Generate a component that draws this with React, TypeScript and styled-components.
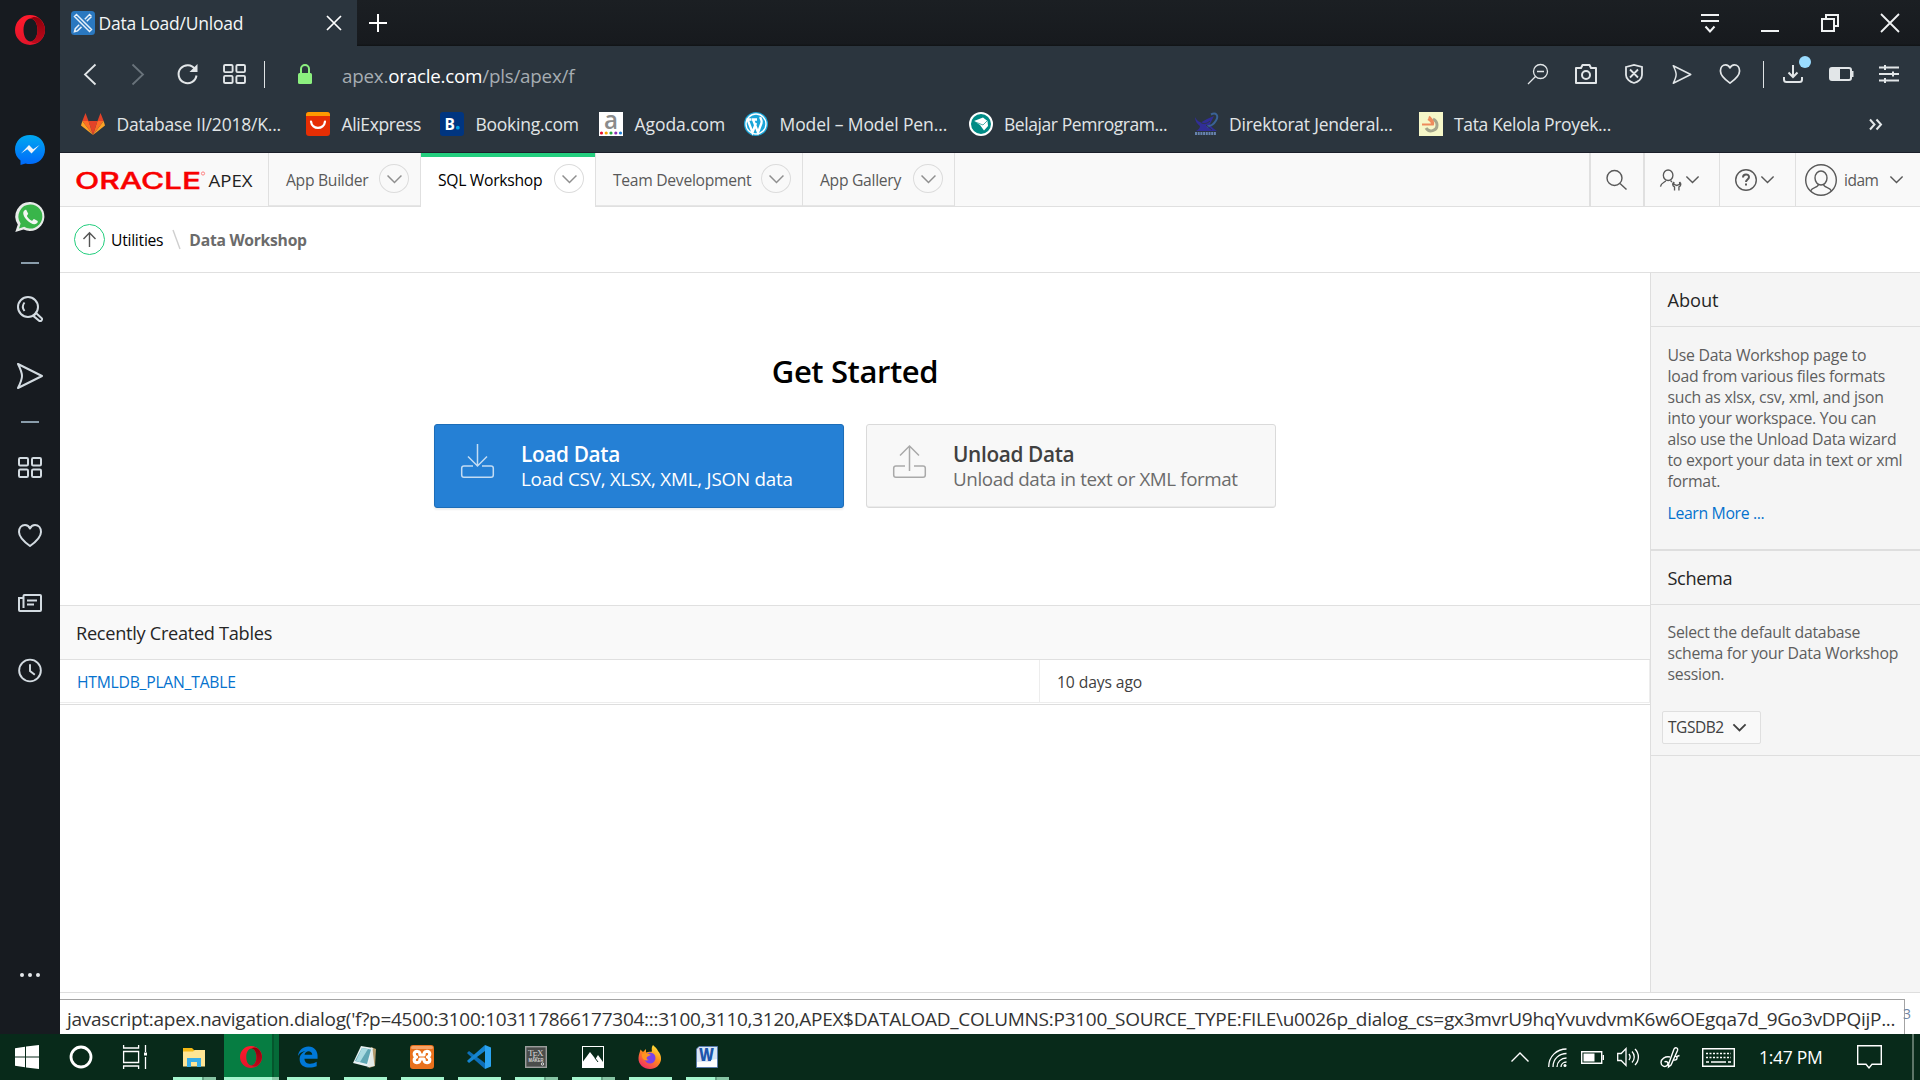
import React from 'react';
import styled, { createGlobalStyle, css } from 'styled-components';

const GlobalStyle = createGlobalStyle`
  *, *::before, *::after { box-sizing: border-box; }
  body { margin: 0; background: #fff; font-family: "Open Sans", "Noto Sans", sans-serif; }
`;

const Screen = styled.div`
  display: flex;
  flex-direction: column;
  width: 1920px;
  height: 1080px;
  overflow: hidden;
`;

const BrowserWindow = styled.div`
  display: flex;
  height: 1034px;
`;

const Line = styled.svg<{ $stroke?: number }>`
  display: block;
  flex: none;
  overflow: visible;
  fill: none;
  stroke: currentColor;
  stroke-width: ${(p) => p.$stroke ?? 2};
`;

const Picture = styled.svg`
  display: block;
  flex: none;
  overflow: visible;
`;

/* ---------- Opera sidebar ---------- */

const Sidebar = styled.aside`
  display: flex;
  flex-direction: column;
  flex: none;
  width: 60px;
  background: #171b20;
  color: #d3dbe1;
`;

const OperaSlot = styled.div`
  display: grid;
  place-items: center;
  height: 60px;
  margin-bottom: 56px;
`;

const SideSlot = styled.div`
  display: grid;
  place-items: center;
  height: 67.5px;
`;

const SideRule = styled.div`
  display: grid;
  place-items: center;
  height: 24px;
  &::after {
    content: '';
    width: 18px;
    height: 2px;
    background: #8a9dab;
  }
`;

const SideMore = styled(SideSlot)`
  margin-top: auto;
  height: 20px;
  margin-bottom: 49px;
`;

/* ---------- Browser chrome ---------- */

const Main = styled.div`
  display: flex;
  flex-direction: column;
  flex: 1;
  min-width: 0;
`;

const Chrome = styled.header`
  height: 153px;
  background: #2b353e;
  border-bottom: 1px solid #1b1f2a;
  color: #e4e8ea;
`;

const TabStrip = styled.div`
  display: flex;
  height: 46px;
  background: linear-gradient(#1b1f23, #171a1e 95%, #101315);
`;

const Tab = styled.div`
  display: flex;
  align-items: center;
  width: 297px;
  padding: 0 16px 0 11px;
  background: #2b353e;
  color: #fff;
`;

const TabTitle = styled.span`
  flex: 1;
  margin-left: 3.5px;
  font-size: 17.5px;
  line-height: 46px;
  letter-spacing: -0.22px;
  color: #f4f6f7;
`;

const NewTab = styled.div`
  display: grid;
  place-items: center;
  width: 42px;
  color: #fff;
`;

const WindowControls = styled.div`
  display: flex;
  margin-left: auto;
`;

const ControlSlot = styled.div`
  display: grid;
  place-items: center;
  width: 60px;
  height: 46px;
  color: #f0f2f3;
`;

const AddressRow = styled.div`
  display: flex;
  align-items: center;
  height: 56px;
  padding: 0 7px 0 6px;
`;

const ToolSlot = styled.div<{ $faded?: boolean }>`
  position: relative;
  display: grid;
  place-items: center;
  width: 48px;
  height: 48px;
  color: ${(p) => (p.$faded ? '#69737b' : '#e2e6e8')};
`;

const ToolRule = styled.div<{ $before: number; $after: number }>`
  width: 1px;
  height: 27px;
  margin: 0 ${(p) => p.$after}px 0 ${(p) => p.$before}px;
  background: #dfe3e5;
`;

const DownloadDot = styled.i`
  position: absolute;
  top: 6px;
  right: 6px;
  width: 12px;
  height: 12px;
  border-radius: 50%;
  background: #9adcff;
`;

const Url = styled.div`
  flex: 1;
  margin-left: 30px;
  padding-top: 3px;
  font-size: 18.8px;
  letter-spacing: -0.22px;
  color: #a6adb2;
  b {
    font-weight: 400;
    color: #fff;
  }
`;

const Bookmarks = styled.div`
  display: flex;
  align-items: center;
  height: 44px;
  padding: 0 38px 0 21px;
`;

const Bookmark = styled.div<{ $width: number; $track: number }>`
  display: flex;
  align-items: center;
  width: ${(p) => p.$width}px;
  font-size: 17.5px;
  line-height: 44px;
  letter-spacing: ${(p) => p.$track}px;
  white-space: nowrap;
  color: #e1e5e7;
  svg { margin-right: 11.5px; }
`;

const BookmarkOverflow = styled.div`
  margin-left: auto;
`;

/* ---------- APEX page ---------- */

const ApexBar = styled.nav`
  display: flex;
  height: 54px;
  background: #f9f9f9;
  border-bottom: 1px solid #e0e0e0;
  color: #595959;
`;

const Brand = styled.div`
  display: flex;
  align-items: center;
  width: 209px;
  padding-left: 16px;
  border-right: 1px solid #e0e0e0;
`;

const NavItem = styled.div<{ $width: number; $active?: boolean }>`
  display: flex;
  align-items: center;
  width: ${(p) => p.$width}px;
  height: 53px;
  padding: 0 11px 0 17px;
  border-right: 1px solid #e0e0e0;
  font-size: 15.7px;
  letter-spacing: -0.3px;
  white-space: nowrap;
  color: #595959;
  box-shadow: inset 0 -1px #e6e6e6;
  ${(p) =>
    p.$active &&
    css`
      height: 54px;
      padding-bottom: 1px;
      color: #000;
      background: #fff;
      box-shadow: inset 0 4px #23ce7e;
    `}
`;

const DropCircle = styled.span`
  display: grid;
  place-items: center;
  width: 30px;
  height: 29px;
  margin: -2px 0 0 auto;
  border: 1px solid #dcdcdc;
  border-radius: 50%;
  color: #8f8f8f;
`;

const ActionGroup = styled.div`
  display: flex;
  margin-left: auto;
`;

const Action = styled.div<{ $width: number; $bar?: number }>`
  display: flex;
  align-items: center;
  padding-left: 15px;
  gap: 4px;
  width: ${(p) => p.$width}px;
  border-left: ${(p) => p.$bar ?? 1}px solid #e0e0e0;
  font-size: 15.5px;
  letter-spacing: -0.5px;
`;

const UserAction = styled(Action)`
  padding-left: 9px;
`;

const UserName = styled.span`
  margin: 0 8px 0 3px;
`;

const Breadcrumb = styled.div`
  display: flex;
  align-items: center;
  height: 66px;
  padding-left: 14px;
  border-bottom: 1px solid #e0e0e0;
  font-size: 15.7px;
  letter-spacing: -0.27px;
  color: #000;
`;

const UpButton = styled.span`
  display: grid;
  place-items: center;
  width: 31px;
  height: 31px;
  margin-right: 6px;
  border: 1.5px solid #23ce7e;
  border-radius: 50%;
  color: #555;
`;

const Slash = styled(Line)`
  margin: 0 9px 0 10px;
  color: #cfcfcf;
`;

const CurrentCrumb = styled.b`
  color: #6b6b6b;
  font-weight: 700;
`;

const Columns = styled.div`
  display: flex;
  height: 720px;
  border-bottom: 1px solid #dedede;
`;

const Content = styled.main`
  display: flex;
  flex-direction: column;
  flex: 1;
`;

const Hero = styled.section`
  display: flex;
  flex-direction: column;
  align-items: center;
  height: 332px;
  padding-top: 77px;
`;

const HeroTitle = styled.h1`
  margin: 0;
  font-size: 31px;
  font-weight: 600;
  line-height: 42px;
  letter-spacing: -0.4px;
  color: #000;
`;

const Choices = styled.div`
  display: flex;
  gap: 22px;
  margin-top: 32px;
`;

const Choice = styled.div<{ $primary?: boolean }>`
  display: flex;
  align-items: center;
  width: 410px;
  height: 84px;
  padding-left: 26px;
  border: 1px solid ${(p) => (p.$primary ? '#1c6db8' : '#dadada')};
  border-radius: 3px;
  background: ${(p) => (p.$primary ? '#2580d5' : '#f8f8f8')};
  box-shadow: ${(p) => (p.$primary ? '0 2px 2px rgba(0,0,0,.07)' : 'inset 0 -1px #ebebeb')};
  color: ${(p) => (p.$primary ? '#fff' : '#6b6b6b')};
`;

const ChoiceIcon = styled.span<{ $primary?: boolean }>`
  width: 34px;
  margin: -10px 26px 0 0;
  color: ${(p) => (p.$primary ? '#c4dcf3' : '#a9a9a9')};
`;

const ChoiceText = styled.div<{ $track: number }>`
  padding-top: 2px;
  font-size: 18.8px;
  line-height: 25px;
  letter-spacing: ${(p) => p.$track}px;
  white-space: nowrap;
`;

const ChoiceTitle = styled.div<{ $primary?: boolean }>`
  font-size: 20.8px;
  font-weight: 600;
  letter-spacing: -0.35px;
  color: ${(p) => (p.$primary ? '#fff' : '#404040')};
`;

const RegionHead = styled.h2`
  margin: 0;
  height: 55px;
  padding-left: 16px;
  border: solid #e0e0e0;
  border-width: 1px 0;
  background: #f9f9f9;
  font-size: 18.2px;
  font-weight: 400;
  line-height: 54px;
  letter-spacing: -0.3px;
  color: #262626;
`;

const TableRow = styled.div`
  display: flex;
  height: 45px;
  border-bottom: 1px solid #dedede;
  font-size: 15.7px;
  line-height: 44px;
`;

const Cell = styled.div<{ $width?: number; $link?: boolean }>`
  width: ${(p) => (p.$width ? `${p.$width}px` : 'auto')};
  flex: ${(p) => (p.$width ? 'none' : 1)};
  height: 43px;
  padding-left: 17px;
  border: solid #ededed;
  border-width: 0 1px 1px 0;
  letter-spacing: ${(p) => (p.$link ? -0.24 : -0.12)}px;
  color: ${(p) => (p.$link ? '#0572ce' : '#404040')};
`;

const SidePanel = styled.aside`
  flex: none;
  width: 270px;
  border-left: 1px solid #dedede;
  background: #f5f5f5;
`;

const PanelHead = styled.h2<{ $track: number }>`
  margin: 0;
  height: 54px;
  padding-left: 16.5px;
  border-bottom: 1px solid #dedede;
  font-size: 18.2px;
  font-weight: 400;
  line-height: 54px;
  letter-spacing: ${(p) => p.$track}px;
  color: #262626;
`;

const PanelBody = styled.div<{ $height: number; $rule: number; $top: number }>`
  height: ${(p) => p.$height}px;
  padding: ${(p) => p.$top}px 8px 0 16.5px;
  border-bottom: ${(p) => p.$rule}px solid #dedede;
  font-size: 15.8px;
  line-height: 21.1px;
  letter-spacing: -0.26px;
  white-space: nowrap;
  color: #5e5e5e;
`;

const LearnMore = styled.div`
  margin-top: 10px;
  letter-spacing: -0.35px;
  color: #0572ce;
`;

const Select = styled.div`
  display: flex;
  align-items: center;
  gap: 9px;
  width: 99px;
  height: 33px;
  margin: 26px 0 0 -5.5px;
  padding-left: 5px;
  border: 1px solid #dfdfdf;
  border-radius: 2px;
  background: #f9f9f9;
  font-size: 15.5px;
  letter-spacing: -0.45px;
  color: #404040;
`;

const Footer = styled.footer`
  display: flex;
  align-items: flex-end;
  flex: 1;
`;

const LinkStatus = styled.div`
  width: 1845px;
  height: 35px;
  padding: 2px 0 0 7px;
  border: solid #a3a3a3;
  border-width: 1px 1px 0 0;
  font-size: 19px;
  line-height: 35px;
  letter-spacing: -0.273px;
  white-space: nowrap;
  color: #333;
`;

const VersionEnd = styled.span`
  align-self: center;
  margin-left: -2px;
  font-size: 14px;
  color: #7086a4;
`;

/* ---------- Windows taskbar ---------- */

const Taskbar = styled.div`
  display: flex;
  height: 46px;
  background: #082a1a;
  color: #fff;
`;

const SystemSlot = styled.div`
  display: grid;
  place-items: center;
  width: 54px;
`;

const Apps = styled.div`
  display: flex;
  margin-left: 4px;
`;

const AppSlot = styled.div<{ $active?: boolean; $stacked?: boolean }>`
  position: relative;
  display: grid;
  place-items: center;
  width: ${(p) => (p.$active ? 55 : 57)}px;
  margin: ${(p) => (p.$active ? '0 1px' : '0')};
  padding-right: 2px;
  background: ${(p) =>
    p.$active ? 'linear-gradient(90deg, #067d42 48px, #04562d 48px 50px, #056a38 50px)' : 'none'};
  &::after {
    content: '';
    position: absolute;
    left: ${(p) => (p.$active ? 0 : 7)}px;
    bottom: 0;
    width: ${(p) => (p.$active ? 55 : 43)}px;
    height: 3px;
    background: ${(p) =>
      p.$active
        ? 'linear-gradient(90deg, #a5f5ce 48px, #8acaa8 48px)'
        : p.$stacked
          ? 'linear-gradient(90deg, #a5f5ce 29px, #63a382 29px 31px, #86c5a4 31px)'
          : '#a5f5ce'};
  }
`;

const Tray = styled.div`
  display: flex;
  margin-left: auto;
`;

const TraySlot = styled.div<{ $width: number }>`
  display: grid;
  place-items: center;
  width: ${(p) => p.$width}px;
`;

const Clock = styled.div`
  width: 95px;
  padding: 0 0 0 15px;
  font-size: 17.5px;
  line-height: 47px;
  letter-spacing: -0.3px;
`;

const ShowDesktop = styled.div`
  width: 8px;
  border-left: 2px solid #5d7568;
`;

/* ---------- Drawings ---------- */

const OperaLogo = ({ size, id }: { size: number; id: string }) => (
  <Picture width={size} height={size} viewBox="0 0 30 30">
    <defs>
      <linearGradient id={id} x1="0" y1="0" x2="0" y2="1">
        <stop offset="0" stopColor="#ff1b2d" />
        <stop offset="1" stopColor="#e3152a" />
      </linearGradient>
      <linearGradient id={`${id}r`} x1="0" y1="0" x2="0" y2="1">
        <stop offset="0" stopColor="#8e000b" />
        <stop offset="1" stopColor="#bd0a1c" />
      </linearGradient>
    </defs>
    <path fill={`url(#${id})`} fillRule="evenodd" d="M15 0a15 15 0 1 1 0 30 15 15 0 0 1 0-30zM15.500 3.500C11.500 3.500 8.500 8.500 8.500 15s3 11.500 7 11.500 7-5 7-11.500-3-11.500-7-11.500z" />
    <path fill={`url(#${id}r)`} d="M15.500 3.500C18 1.200 22 1.500 25 4c3 3 5 7 5 11s-2 8-5 11c-3 2.500-7 2.800-9.500.5 4 0 7-5 7-11.500s-3-11.500-7-11.500z" />
  </Picture>
);

const GridIcon = ({ w, h }: { w: number; h: number }) => (
  <Line width={w} height={h} viewBox="0 0 24 21" $stroke={2}>
    <rect x="1" y="1" width="9" height="7.500" rx="1.200" />
    <rect x="14" y="1" width="9" height="7.500" rx="1.200" />
    <rect x="1" y="12.500" width="9" height="7.500" rx="1.200" />
    <rect x="14" y="12.500" width="9" height="7.500" rx="1.200" />
  </Line>
);

const HeartIcon = ({ w, h }: { w: number; h: number }) => (
  <Line width={w} height={h} viewBox="0 0 24 23" strokeLinejoin="round">
    <path d="M12 22C5 17 1 12.500 1 8c0-4 2.500-7 6-7 2.500 0 4 1.200 5 3.500C13 2.200 14.500 1 17 1c3.500 0 6 3 6 7 0 4.500-4 9-11 14z" />
  </Line>
);

const SendIcon = ({ w, h }: { w: number; h: number }) => (
  <Line width={w} height={h} viewBox="0 0 26 26" strokeLinejoin="round">
    <path d="M1 1l24 12L1 25c3-6 4-9 4-12S4 7 1 1z" />
  </Line>
);

const Chevron = ({ w = 13, h = 7, stroke = 1.4 }: { w?: number; h?: number; stroke?: number }) => (
  <Line width={w} height={h} viewBox="0 0 13 7" $stroke={stroke}>
    <path d="M.4.4l6.100 6.100L12.600.4" />
  </Line>
);

const bookmarks = [
  {
    label: 'Database II/2018/K...', width: 225, track: -0.2,
    art: (
      <>
        <path fill="#e24329" d="M12 23L7.500 9h9z" />
        <path fill="#fc6d26" d="M12 23L7.500 9H1.300zM12 23l4.500-14h6.200z" />
        <path fill="#fca326" d="M1.300 9L0 13.500 12 23zM22.700 9l1.300 4.500L12 23z" />
        <path fill="#e24329" d="M1.300 9h6.200L4.500 1zM22.700 9h-6.200l3-8z" />
      </>
    ),
  },
  {
    label: 'AliExpress', width: 134, track: -0.36,
    art: (
      <>
        <rect width="24" height="24" rx="3" fill="#e62e04" />
        <path fill="#ff9a00" d="M3 0h18a3 3 0 0 1 3 3v1H0V3a3 3 0 0 1 3-3z" />
        <path fill="none" stroke="#fff" strokeWidth="2.200" strokeLinecap="round" d="M5 9.500c1 8.500 13 8.500 14 0" />
      </>
    ),
  },
  {
    label: 'Booking.com', width: 159, track: -0.25,
    art: (
      <>
        <rect width="24" height="24" rx="3" fill="#003580" />
        <text x="4.500" y="17.500" fontSize="15.500" fontWeight="700" fontFamily="Open Sans" fill="#fff">B</text>
        <circle cx="17.800" cy="15.700" r="1.900" fill="#009fe3" />
      </>
    ),
  },
  {
    label: 'Agoda.com', width: 145, track: -0.06,
    art: (
      <>
        <rect width="24" height="24" fill="#fff" />
        <text x="5" y="16.500" fontSize="25" fontWeight="600" fontFamily="Open Sans" fill="#8b8b8b" textLength="14" lengthAdjust="spacingAndGlyphs">a</text>
        <circle cx="2.500" cy="21" r="1.600" fill="#e8112d" /><circle cx="7.200" cy="21" r="1.600" fill="#f7a600" />
        <circle cx="12" cy="21" r="1.600" fill="#27a844" /><circle cx="16.800" cy="21" r="1.600" fill="#8c2fb4" />
        <circle cx="21.500" cy="21" r="1.600" fill="#1e7fd6" />
      </>
    ),
  },
  {
    label: 'Model – Model Pen...', width: 224.5, track: -0.1,
    art: (
      <>
        <circle cx="12" cy="12" r="12" fill="#1aa5d8" />
        <circle cx="12" cy="12" r="10" fill="none" stroke="#fff" strokeWidth="1.400" />
        <path fill="none" stroke="#fff" strokeWidth="2.300" d="M3.800 8l4.700 12.500L12 11M9 7.500l5 13 3.500-9.500c1-3-1.500-4-1-6M2.500 7.500h5M8 7.500h5" />
      </>
    ),
  },
  {
    label: 'Belajar Pemrogram...', width: 225, track: -0.43,
    art: (
      <>
        <circle cx="12" cy="12" r="11" fill="#008b85" stroke="#fff" strokeWidth="2" />
        <path fill="#fff" d="M5 9L14 5.500l4.500 3.500.5 5-4 4.500-4-5.500z" />
        <path stroke="#008b85" strokeWidth=".7" d="M5 9.500l9 3.500 4-4" fill="none" />
      </>
    ),
  },
  {
    label: 'Direktorat Jenderal...', width: 225, track: -0.23,
    art: (
      <>
        <path fill="#312e97" d="M1 5c2 4 4 4.500 6 5.500L13 7l7-3-4 8c1 3 4 5 7 7H2c3-2 4-3 4-5C3 12 1 9 1 5z" />
        <path fill="none" stroke="#3a6296" strokeWidth="2" d="M17 2.500c5-2.500 8 1 5 6s-5 5-9 6" />
        <path stroke="#2b353e" strokeWidth=".9" d="M7 10.500c3 2 6 1 9-1.500M12 13l6 5" fill="none" />
        <path stroke="#6783ad" strokeWidth="3" strokeDasharray="2 .7" d="M1 21.500h21" />
      </>
    ),
  },
  {
    label: 'Tata Kelola Proyek...', width: 220, track: -0.33,
    art: (
      <>
        <rect width="24" height="24" fill="#f6f7c8" />
        <path fill="none" stroke="#a5a68c" strokeWidth="3" d="M7 16c3 5 11 3 11-3 0-3-2-5-4-6" />
        <path fill="none" stroke="#ee8b5c" strokeWidth="2" d="M3 12.500h11c1-2-1-5-4-8M9 7c2 1 4 3 4 5" />
      </>
    ),
  },
];

const apps: { name: string; active?: boolean; stacked?: boolean; art: React.ReactNode }[] = [
  {
    name: 'explorer', stacked: true,
    art: (
      <Picture width="24" height="24" viewBox="0 0 24 24">
        <path fill="#f5b915" d="M1 3h9l2 2v3H1z" />
        <path fill="#ffe594" d="M1 6.500h10L12.500 5H23v16.500H1z" />
        <path fill="#38ade8" d="M5 13h14v9h-4v-5H9v5H5z" />
      </Picture>
    ),
  },
  { name: 'opera', active: true, art: <OperaLogo size={22} id="taskOpera" /> },
  {
    name: 'edge',
    art: (
      <Picture width="21" height="22" viewBox="0 0 24 24">
        <path fill="#0078d7" d="M1 11C2 4 7 0 13 0c7 0 10.500 5.500 10.500 10.500V14H8.500c.3 7 9 7 14 3.500v5C14 26 3 24 3 14.500 3 10 6 6.500 10 5 5 5.500 2.500 8 1 11zm7.600-1.500h8.800c0-5.500-8-5.500-8.800 0z" />
      </Picture>
    ),
  },
  {
    name: 'notepad',
    art: (
      <Picture width="24" height="24" viewBox="0 0 24 24">
        <path fill="#b39a6c" d="M18 2l5 2-1 17-6 2z" />
        <path fill="#e7f1f2" d="M8 1l12 2-4 19L0 18z" />
        <path fill="#5fa7b4" d="M9 3l9 1.500-4 14.500-12-3z" />
        <path fill="#a9dbe1" d="M9 3l6 1-8 13-4-1z" />
        <path fill="#e3eae8" d="M19.500 4l2 17-7 1.500z" />
      </Picture>
    ),
  },
  {
    name: 'xampp',
    art: (
      <Picture width="24" height="24" viewBox="0 0 24 24">
        <rect width="24" height="24" rx="3" fill="#e9711c" />
        <rect x="1" y="1" width="22" height="3" rx="1.500" fill="#f6a468" />
        <path fill="none" stroke="#fff" strokeWidth="3.200" strokeLinejoin="round" d="M8 6.500c-5-1-4.500 4.500-1.500 5.500-3 1-3.500 6.500 1.500 5.500 2-.3 2-2 2-3.500h4c0 1.500 0 3.200 2 3.500 5 1 4.500-4.500 1.500-5.500 3-1 3.500-6.500-1.500-5.500-2 .3-2 2-2 3.500h-4c0-1.500 0-3.200-2-3.500z" />
      </Picture>
    ),
  },
  {
    name: 'code',
    art: (
      <Picture width="24" height="24" viewBox="0 0 24 24">
        <path fill="#0d6fb8" d="M0 8l2-2 16 12v6L1.500 9.500z" />
        <path fill="#1685d1" d="M0 16l2 2L18 6V0L1.500 14.500z" />
        <path fill="#2ba4f1" d="M18 0l6 2.500v19L18 24z" />
      </Picture>
    ),
  },
  {
    name: 'texmaker', stacked: true,
    art: (
      <Picture width="22" height="22" viewBox="0 0 22 22">
        <rect x=".7" y=".7" width="20.600" height="20.600" fill="#4a4d4b" stroke="#9c9e9d" strokeWidth="1.400" />
        <text x="3" y="10" fontFamily="Liberation Serif" fontSize="9" fill="#d5d5d5">T</text>
        <text x="7.500" y="12" fontFamily="Liberation Serif" fontSize="9" fill="#d5d5d5">E</text>
        <text x="12" y="10" fontFamily="Liberation Serif" fontSize="9" fill="#d5d5d5">X</text>
        <text x="3.500" y="16" fontFamily="Liberation Sans" fontWeight="700" fontSize="4.500" fill="#d5d5d5" textLength="15" lengthAdjust="spacingAndGlyphs">MAKER</text>
        <circle cx="17.500" cy="18" r="1.200" fill="none" stroke="#ddd" />
      </Picture>
    ),
  },
  {
    name: 'photos', stacked: true,
    art: (
      <Picture width="22" height="22" viewBox="0 0 22 22">
        <rect x=".5" y=".5" width="21" height="21" fill="none" stroke="#fff" />
        <path fill="#fff" d="M1 15.500L8 6l5.500 7L16 9l5 7v5H1z" />
        <path stroke="#082a1a" d="M13 12l3 4" />
      </Picture>
    ),
  },
  {
    name: 'firefox',
    art: (
      <Picture width="24" height="24" viewBox="0 0 24 24">
        <defs>
          <linearGradient id="fox" x1=".8" y1="0" x2=".2" y2="1">
            <stop offset="0" stopColor="#ffe93b" /><stop offset=".45" stopColor="#ff8d1b" /><stop offset="1" stopColor="#f0246a" />
          </linearGradient>
        </defs>
        <path fill="url(#fox)" d="M15 0c2 2 4 3.500 5 6 1.500 1.500 3.500 5 3 9-1 5-5 9-11 9S0 19.500 .5 13C.7 9 2 7 2.500 4.500L5 7l3-3v3.500c3-1 4.500-.5 6-1C13.500 4 13.500 2 15 0z" />
        <circle cx="12" cy="13" r="5.500" fill="#7a42e8" />
        <path fill="#ff9420" d="M4 9c3-2 6-1 9 1-2 1-3 1-4 2s0 3 2 3c-4 1.500-8-1-7-6z" />
      </Picture>
    ),
  },
  {
    name: 'word', stacked: true,
    art: (
      <Picture width="22" height="22" viewBox="0 0 22 22">
        <path fill="#d9e6f7" stroke="#5379b5" strokeWidth=".8" d="M3 .5h18.500v21H.5V3z" />
        <path fill="#fff" d="M1 16c7-1 10 1 20-1v6H1z" />
        <text x="3" y="15" fontFamily="Open Sans" fontWeight="800" fontSize="17" fill="#1c56ad" textLength="15" lengthAdjust="spacingAndGlyphs">W</text>
        <path fill="#fff" d="M15 14l6-1v7h-5z" />
      </Picture>
    ),
  },
];

const BrowserSidebar = () => (
  <Sidebar>
    <OperaSlot><OperaLogo size={30} id="sideOpera" /></OperaSlot>
    <SideSlot>
      <Picture width="30" height="30" viewBox="0 0 30 30">
        <defs>
          <linearGradient id="msg" x1="0" y1="0" x2="0" y2="1">
            <stop offset="0" stopColor="#00a8f0" /><stop offset="1" stopColor="#0068fa" />
          </linearGradient>
        </defs>
        <path fill="url(#msg)" d="M15 0c8.500 0 15 6 15 14.500S23.500 29 15 29c-1.500 0-3-.2-4.500-.6L5.500 30v-4.500C2 22.800 0 19 0 14.500 0 6 6.500 0 15 0z" />
        <path fill="#eef2f8" d="M6 18.500l8-8.500 4.200 4.200L24.500 10l-8 8.500-4.200-4.300z" />
      </Picture>
    </SideSlot>
    <SideSlot>
      <Picture width="30" height="30" viewBox="0 0 30 30">
        <path fill="#e8ebe9" d="M15.500 0a14.500 14.500 0 1 1-7 27.500L.3 30l2.500-7.500A14.500 14.500 0 0 1 15.500 0z" />
        <path fill="#39b54a" d="M15.500 2.500a12 12 0 1 1-6.300 22.300L4 26.400l1.600-5A12 12 0 0 1 15.500 2.500z" />
        <path fill="#f3f6f3" d="M11.200 7.800c-.8-.5-3 .8-3 3.200 0 4.500 6.500 11.200 11.300 11.200 2.400 0 3.700-2.200 3.200-3.200l-3.700-2c-.9.3-1.200 1.500-2 1.700-1.800-.4-4.600-3.200-5-4.800.1-.9 1.100-1.300 1.200-2.200z" />
      </Picture>
    </SideSlot>
    <SideRule />
    <SideSlot>
      <Line width="26" height="26" viewBox="0 0 26 26">
        <circle cx="11" cy="11" r="10" />
        <path d="M7.500 6.500c-2 2.500-2 6 0 8.500M16.500 20l2.500-3 6 5.500c.5 1.500-1 3-2.500 2.500z" />
      </Line>
    </SideSlot>
    <SideSlot><SendIcon w={26} h={26} /></SideSlot>
    <SideRule />
    <SideSlot><GridIcon w={24} h={21} /></SideSlot>
    <SideSlot><HeartIcon w={24} h={23} /></SideSlot>
    <SideSlot>
      <Line width="24" height="18" viewBox="0 0 24 18">
        <path d="M5.500 14V2c0-.6.400-1 1-1H22c.6 0 1 .4 1 1v14c0 .6-.4 1-1 1H2c-.6 0-1-.4-1-1V4h4M9 6.500h10M9 10.500h7" />
      </Line>
    </SideSlot>
    <SideSlot>
      <Line width="24" height="25" viewBox="0 0 25 25">
        <circle cx="12.500" cy="12.500" r="11.300" />
        <path d="M12.500 6v7l5 4" />
      </Line>
    </SideSlot>
    <SideMore>
      <Picture width="20" height="4" viewBox="0 0 20 4" fill="#e4e8ea">
        <circle cx="2" cy="2" r="2" /><circle cx="10" cy="2" r="2" /><circle cx="18" cy="2" r="2" />
      </Picture>
    </SideMore>
  </Sidebar>
);

const BrowserChrome = () => (
  <Chrome>
    <TabStrip>
      <Tab>
        <Picture width="24" height="24" viewBox="0 0 24 24">
          <rect width="24" height="24" rx="3.500" fill="#2a78c0" />
          <path fill="none" stroke="#e6f0fa" strokeWidth="1.500" d="M3.500 5.500l2-2 15 15-2 2zM20.500 5.500l-2-2-4.700 4.700M8.200 13.800L4.300 17.700l-.8 3 3-.8 4-4M20.500 5.500l-4.700 4.700" />
        </Picture>
        <TabTitle>Data Load/Unload</TabTitle>
        <Line width="14" height="14" viewBox="0 0 14 14" $stroke={1.700}><path d="M0 0l14 14M14 0L0 14" /></Line>
      </Tab>
      <NewTab><Line width="18" height="18" viewBox="0 0 18 18"><path d="M9 0v18M0 9h18" /></Line></NewTab>
      <WindowControls>
        <ControlSlot>
          <Line width="18" height="19" viewBox="0 0 18 19"><path d="M0 1h18M0 7h18M4.500 12.500L9 17.500l4.500-5" /></Line>
        </ControlSlot>
        <ControlSlot>
          <Line width="18" height="18" viewBox="0 0 18 18"><path d="M0 17h18" /></Line>
        </ControlSlot>
        <ControlSlot>
          <Line width="18" height="18" viewBox="0 0 18 18"><path d="M1 5h12v12H1zM5 5V1h12v11h-4" /></Line>
        </ControlSlot>
        <ControlSlot>
          <Line width="18" height="18" viewBox="0 0 18 18" $stroke={1.800}><path d="M0 0l18 18M18 0L0 18" /></Line>
        </ControlSlot>
      </WindowControls>
    </TabStrip>
    <AddressRow>
      <ToolSlot><Line width="12" height="21" viewBox="0 0 12 21" $stroke={1.800}><path d="M11.500.5L1 10.500l10.500 10" /></Line></ToolSlot>
      <ToolSlot $faded><Line width="12" height="21" viewBox="0 0 12 21" $stroke={1.800}><path d="M.5.5L11 10.500.5 20.500" /></Line></ToolSlot>
      <ToolSlot>
        <Line width="21" height="20" viewBox="-1 0 20 20">
          <path d="M17.500 5A9 9 0 1 0 19 11.500" />
          <path fill="currentColor" stroke="none" d="M20 0v8h-8z" />
        </Line>
      </ToolSlot>
      <ToolSlot><GridIcon w={23} h={20} /></ToolSlot>
      <ToolRule $before={6} $after={33} />
      <Picture width="14" height="20" viewBox="0 0 14 20">
        <path fill="none" stroke="#8cf07f" strokeWidth="2" d="M3 10V5a4 4 0 0 1 8 0v5" />
        <rect y="9" width="14" height="11" rx="1.500" fill="#8cf07f" />
      </Picture>
      <Url>apex.<b>oracle.com</b>/pls/apex/f</Url>
      <ToolSlot>
        <Line width="20" height="20" viewBox="0 0 20 20" $stroke={1.300}><circle cx="12.500" cy="7.500" r="7" /><path d="M7.500 12.500L0 20M9 7.500h7" /></Line>
      </ToolSlot>
      <ToolSlot>
        <Line width="22" height="20" viewBox="0 0 22 20"><path d="M1 4h5l1.500-3h7L16 4h5v15H1z" strokeLinejoin="round" /><circle cx="11" cy="11" r="4" /></Line>
      </ToolSlot>
      <ToolSlot>
        <Line width="18" height="20" viewBox="0 0 18 20" $stroke={1.800}><path d="M1 3l8-2 8 2v8c0 4-4 7-8 8-4-1-8-4-8-8zM5 5.500l8 8M13 5.500l-8 8" /></Line>
      </ToolSlot>
      <ToolSlot><SendIcon w={20} h={19} /></ToolSlot>
      <ToolSlot><HeartIcon w={22} h={20} /></ToolSlot>
      <ToolRule $before={9} $after={5} />
      <ToolSlot>
        <Line width="20" height="18" viewBox="0 0 20 18"><path d="M10 0v12M5.500 7.500L10 12l4.500-4.500M1 12v2.500C1 16 2 17 3.500 17h13c1.500 0 2.500-1 2.500-2.500V12" /></Line>
        <DownloadDot />
      </ToolSlot>
      <ToolSlot>
        <Line width="24" height="14" viewBox="0 0 24 14"><rect x="1" y="1" width="21" height="12" rx="2" /><path d="M23.500 4v6" /><path fill="currentColor" d="M2 2h8v10H2z" /></Line>
      </ToolSlot>
      <ToolSlot>
        <Line width="20" height="18" viewBox="0 0 20 18"><path d="M0 2.500h20M0 9h20M0 15.500h20M6 0v5M14 6.500v5M6 13v5" /></Line>
      </ToolSlot>
    </AddressRow>
    <Bookmarks>
      {bookmarks.map((b) => (
        <Bookmark key={b.label} $width={b.width} $track={b.track}>
          <Picture width="24" height="24" viewBox="0 0 24 24">{b.art}</Picture>
          {b.label}
        </Bookmark>
      ))}
      <BookmarkOverflow>
        <Line width="13" height="11" viewBox="0 0 13 11"><path d="M1 .5l4.500 5-4.500 5M7.500.5l4.500 5-4.500 5" /></Line>
      </BookmarkOverflow>
    </Bookmarks>
  </Chrome>
);

const navItems = [
  { label: 'App Builder', width: 152 },
  { label: 'SQL Workshop', width: 175, active: true },
  { label: 'Team Development', width: 207 },
  { label: 'App Gallery', width: 152 },
];

const ApexHeader = () => (
  <ApexBar>
    <Brand>
      <Picture width="177" height="24" viewBox="0 0 177 24">
        <text x="-1" y="20.500" fontFamily="Inter" fontWeight="500" fontSize="22.800" fill="#f80000" stroke="#f80000" strokeWidth=".4" textLength="126" lengthAdjust="spacingAndGlyphs">ORACLE</text>
        <circle cx="127" cy="5.500" r="1.600" fill="none" stroke="#f66" strokeWidth=".8" />
        <text x="132.500" y="19" fontFamily="Open Sans" fontSize="17" fill="#222" textLength="44" lengthAdjust="spacingAndGlyphs">APEX</text>
      </Picture>
    </Brand>
    {navItems.map((n) => (
      <NavItem key={n.label} $width={n.width} $active={n.active}>
        {n.label}
        <DropCircle><Chevron w={15} h={8} stroke={1.300} /></DropCircle>
      </NavItem>
    ))}
    <ActionGroup>
      <Action $width={54} $bar={2}>
        <Line width="21" height="20" viewBox="0 0 21 20" $stroke={1.400}><circle cx="8.500" cy="8" r="7.500" /><path d="M14 13.500l6.500 6" /></Line>
      </Action>
      <Action $width={76} $bar={2}>
        <Line width="22" height="22" viewBox="0 0 23 22" $stroke={1.400}>
          <ellipse cx="8.500" cy="6" rx="5" ry="5.500" />
          <path d="M6 11.500c0 2-5 2-5.500 6.500M11 11.500l1.500 1.500" />
          <path d="M14.500 13c-2 1.500-1.500 4.500.7 5.300V22M20.500 13c2 1.500 1.500 4.500-.7 5.300V22M14.500 13v2.500l3 1.200 3-1.200V13" />
        </Line>
        <Chevron />
      </Action>
      <Action $width={76}>
        <Line width="22" height="22" viewBox="0 0 22 22" $stroke={1.400}>
          <circle cx="11" cy="11" r="10.300" />
          <path strokeWidth="2" d="M8 8.500c0-4 6-4 6-.5 0 2.500-3 2.500-3 5M11 14.500v2" />
        </Line>
        <Chevron />
      </Action>
      <UserAction $width={125}>
        <Line width="32" height="32" viewBox="0 0 32 32" $stroke={1.400}>
          <circle cx="16" cy="16" r="15.300" />
          <ellipse cx="16" cy="14" rx="6" ry="7" />
          <path d="M13.500 20c0 4-6 2.500-8 7M18.500 20c0 4 6 2.500 8 7" />
        </Line>
        <UserName>idam</UserName>
        <Chevron />
      </UserAction>
    </ActionGroup>
  </ApexBar>
);

const ApexPage = () => (
  <>
    <ApexHeader />
    <Breadcrumb>
      <UpButton>
        <Line width="13" height="15" viewBox="0 0 13 15" $stroke={1.400}><path d="M6.500 15V.8M.5 7l6-6.200 6 6.200" /></Line>
      </UpButton>
      Utilities
      <Slash width="7" height="19" viewBox="0 0 7 19" $stroke={1.400}><path d="M0 0l7 19" /></Slash>
      <CurrentCrumb>Data Workshop</CurrentCrumb>
    </Breadcrumb>
    <Columns>
      <Content>
        <Hero>
          <HeroTitle>Get Started</HeroTitle>
          <Choices>
            <Choice $primary>
              <ChoiceIcon $primary>
                <Line width="33" height="34" viewBox="0 0 33 34" $stroke={1.500}>
                  <path d="M16.500 0v22M7 12.500l9.500 9.500 9.500-9.500M12 22H3c-1.500 0-2.300.8-2.300 2.200V31c0 1.500.8 2.300 2.300 2.300h27c1.500 0 2.300-.8 2.300-2.300v-6.800c0-1.400-.8-2.200-2.300-2.200h-9" />
                </Line>
              </ChoiceIcon>
              <ChoiceText $track={-0.2}>
                <ChoiceTitle $primary>Load Data</ChoiceTitle>
                Load CSV, XLSX, XML, JSON data
              </ChoiceText>
            </Choice>
            <Choice>
              <ChoiceIcon>
                <Line width="33" height="33" viewBox="0 0 33 33" $stroke={1.500}>
                  <path d="M16.500 26V1M7 10.500L16.500 1l9.500 9.500M12 21H3c-1.500 0-2.300.8-2.300 2.200V30c0 1.500.8 2.300 2.300 2.300h27c1.500 0 2.300-.8 2.300-2.300v-6.800c0-1.400-.8-2.200-2.300-2.200h-9" />
                </Line>
              </ChoiceIcon>
              <ChoiceText $track={-0.4}>
                <ChoiceTitle>Unload Data</ChoiceTitle>
                Unload data in text or XML format
              </ChoiceText>
            </Choice>
          </Choices>
        </Hero>
        <RegionHead>Recently Created Tables</RegionHead>
        <TableRow>
          <Cell $width={980} $link>HTMLDB_PLAN_TABLE</Cell>
          <Cell>10 days ago</Cell>
        </TableRow>
      </Content>
      <SidePanel>
        <PanelHead $track={-0.05}>About</PanelHead>
        <PanelBody $height={224} $rule={2} $top={17.9}>
          Use Data Workshop page to<br />
          load from various files formats<br />
          such as xlsx, csv, xml, and json<br />
          into your workspace. You can<br />
          also use the Unload Data wizard<br />
          to export your data in text or xml<br />
          format.
          <LearnMore>Learn More ...</LearnMore>
        </PanelBody>
        <PanelHead $track={-0.4}>Schema</PanelHead>
        <PanelBody $height={151} $rule={1} $top={16.7}>
          Select the default database<br />
          schema for your Data Workshop<br />
          session.
          <Select>TGSDB2 <Chevron stroke={1.800} /></Select>
        </PanelBody>
      </SidePanel>
    </Columns>
    <Footer>
      <LinkStatus>
        {"javascript:apex.navigation.dialog('f?p=4500:3100:103117866177304:::3100,3110,3120,APEX$DATALOAD_COLUMNS:P3100_SOURCE_TYPE:FILE\\u0026p_dialog_cs=gx3mvrU9hqYvuvdvmK6w6OEgqa7d_9Go3vDPQijP..."}
      </LinkStatus>
      <VersionEnd>3</VersionEnd>
    </Footer>
  </>
);

const WindowsTaskbar = () => (
  <Taskbar>
    <SystemSlot>
      <Picture width="24" height="24" viewBox="0 0 24 24" fill="#fff">
        <path d="M0 3.300l10-1.500V11.500H0zM11 1.600L24 0v11.500H11zM0 12.500h10v9.700L0 20.700zM11 12.500h13V24l-13-1.600z" />
      </Picture>
    </SystemSlot>
    <SystemSlot>
      <Line width="24" height="24" viewBox="0 0 24 24" $stroke={2.800}><circle cx="12" cy="12" r="10" /></Line>
    </SystemSlot>
    <SystemSlot>
      <Line width="24" height="24" viewBox="0 0 24 24" $stroke={1.300}>
        <path d="M.6 6.500h15v11H.6zM.6 0v3h15V0M.6 24v-3h15v3M22.500 0v7M22.500 12v12" />
        <path fill="#fff" stroke="none" d="M21 7.500h3v3h-3z" />
      </Line>
    </SystemSlot>
    <Apps>
      {apps.map((a) => (
        <AppSlot key={a.name} $active={a.active} $stacked={a.stacked}>{a.art}</AppSlot>
      ))}
    </Apps>
    <Tray>
      <TraySlot $width={34}>
        <Line width="18" height="10" viewBox="0 0 18 10" $stroke={1.400}><path d="M.5 9.500L9 1l8.500 8.500" /></Line>
      </TraySlot>
      <TraySlot $width={40}>
        <Line width="19" height="19" viewBox="0 0 19 19" $stroke={1.300}>
          <path d="M.7 19C.7 8 9 1 18.500 1M5 19C5 10 12 5.500 18.500 5.500M9 19c0-5 4-9 9.500-9M13 19c0-3 2.500-5 5.500-5" />
          <circle cx="17" cy="17.500" r="1.500" fill="#fff" stroke="none" />
        </Line>
      </TraySlot>
      <TraySlot $width={31}>
        <Line width="23" height="13" viewBox="0 0 23 13" $stroke={1.400}><path d="M.7.7h20v11.600H.7z" /><path d="M22.300 4v5" /><path fill="#fff" stroke="none" d="M2.500 2.500h11v8h-11z" /></Line>
      </TraySlot>
      <TraySlot $width={40}>
        <Line width="22" height="20" viewBox="0 0 22 20" $stroke={1.300}><path d="M.7 6.500h3.500L9 1.500v17l-4.800-5H.7zM12 7c1.500 2 1.500 4 0 6M15 4.500c3 3 3 8 0 11M18 2c4.500 4.500 4.500 11.500 0 16" /></Line>
      </TraySlot>
      <TraySlot $width={44}>
        <Line width="20" height="21" viewBox="0 0 20 21" $stroke={1.400}>
          <path d="M14 2c1-2 4.500-1.500 3.500 1.500L11 18l-2.500 2 .3-3.500zM10 10C5 9 1 12 1 15.500S5 21 7.500 18c1.500-2.500-1-4.500-3-3M13.500 13c3 .5 4.500-1.500 3-3.500l3-1" />
        </Line>
      </TraySlot>
      <TraySlot $width={52}>
        <Line width="33" height="19" viewBox="0 0 33 19" $stroke={1.400}>
          <path d="M.7.7h31.600v17.600H.7z" /><path strokeDasharray="2 1.500" d="M4 5.500h25M4 9.500h25" /><path d="M4 14h3M9 14h15M26 14h3" />
        </Line>
      </TraySlot>
      <Clock>1:47 PM</Clock>
      <TraySlot $width={60}>
        <Line width="25" height="24" viewBox="0 0 25 24" $stroke={1.400}><path d="M.7.7h23.600v18.600H15L12 23l-3-3.700H.7z" /></Line>
      </TraySlot>
      <TraySlot $width={13} />
      <ShowDesktop />
    </Tray>
  </Taskbar>
);

export default function App() {
  return (
    <>
      <GlobalStyle />
      <Screen>
        <BrowserWindow>
          <BrowserSidebar />
          <Main>
            <BrowserChrome />
            <ApexPage />
          </Main>
        </BrowserWindow>
        <WindowsTaskbar />
      </Screen>
    </>
  );
}
